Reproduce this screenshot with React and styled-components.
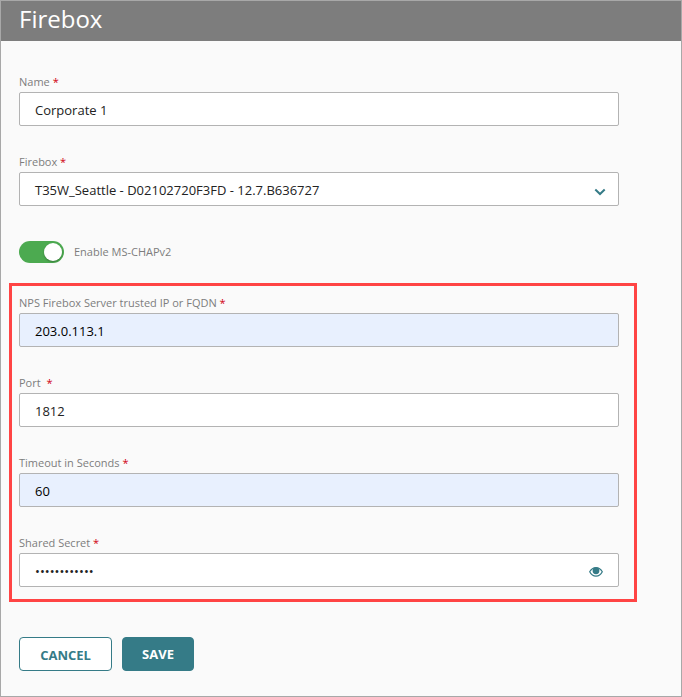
import { useState } from 'react';
import styled, { createGlobalStyle } from 'styled-components';

const GlobalStyle = createGlobalStyle`
    * {
        box-sizing: border-box;
    }

    body {
        margin: 0;
        font-family: "Open Sans", "Noto Sans", sans-serif;
        background: #fafafa;
    }
`;

const Page = styled.div`
    height: 697px;
    border: 1px solid #a8a8a8;
    background: #fafafa;
`;

const Header = styled.header`
    height: 40px;
    padding-left: 18px;
    background: #7d7d7d;
`;

const Title = styled.h1`
    margin: 0;
    color: #fff;
    font-size: 24px;
    font-weight: 400;
    line-height: 35px;
`;

const Form = styled.form`
    display: flex;
    flex-direction: column;
    width: 618px;
    padding: 31px 0 0 18px;
`;

const Field = styled.div`
    margin-bottom: 26px;

    &:last-child {
        margin-bottom: 0;
    }
`;

const Label = styled.div`
    height: 20px;
    color: #7d7d7d;
    font-size: 11px;
    line-height: 20px;
    white-space: pre;
`;

const Required = styled.span`
    color: #d0000f;
    font-weight: 500;
`;

const Control = styled.div`
    display: flex;
    align-items: center;
    justify-content: space-between;
    height: 34px;
    padding: 2px 12px 0 15px;
    border: 1px solid #b3b3b3;
    border-radius: 2px;
    background: ${({ $filled }) => ($filled ? '#e8f0fe' : '#fff')};
    color: ${({ $filled }) => ($filled ? '#000' : '#222')};
    font-size: 13px;
`;

const ToggleRow = styled.div`
    display: flex;
    gap: 10px;
    height: 22px;
    margin: 9px 0 20px;
    color: #7d7d7d;
    font-size: 11px;
    line-height: 21px;
`;

const Toggle = styled.button`
    display: flex;
    justify-content: ${({ $on }) => ($on ? 'flex-end' : 'flex-start')};
    align-items: center;
    width: 45px;
    height: 22px;
    padding: 0 2px;
    border: 0;
    border-radius: 11px;
    background: ${({ $on }) => ($on ? '#4caa50' : '#b3b3b3')};
`;

const Knob = styled.span`
    width: 18px;
    height: 18px;
    border-radius: 50%;
    background: #fff;
    box-shadow: 0 1px 2px rgba(0, 0, 0, 0.3);
`;

const ServerSettings = styled.section`
    width: 628px;
    margin-left: -10px;
    padding: 7px 15px 12px 7px;
    border: 3px solid #ff4444;
`;

const Actions = styled.div`
    display: flex;
    gap: 10px;
    margin-top: 35px;
`;

const Button = styled.button`
    width: ${({ $width }) => $width};
    height: 34px;
    padding: ${({ $primary }) => ($primary ? '0' : '2px 0 0')};
    border: 1px solid #357b87;
    border-radius: 4px;
    background: ${({ $primary }) => ($primary ? '#357b87' : '#fff')};
    color: ${({ $primary }) => ($primary ? '#fff' : '#357b87')};
    font-family: inherit;
    font-size: 13px;
    font-weight: 700;
`;

const Chevron = styled.svg`
    display: block;
    margin-top: 3px;
`;

const Eye = styled.svg`
    display: block;
    margin: 2px 3px 0 0;
`;

const FormField = ({ label, filled, children }) => (
    <Field>
        <Label>{label} <Required>*</Required></Label>
        <Control $filled={filled}>{children}</Control>
    </Field>
);

const ChevronIcon = () => (
    <Chevron width="12" height="8" viewBox="0 0 12 8" fill="none" stroke="#357b87" strokeWidth="2">
        <path d="M1.3 1.5L6 6L10.7 1.5" />
    </Chevron>
);

const EyeIcon = () => (
    <Eye width="14" height="10" viewBox="0 0 14 10" fill="none" stroke="#357b87">
        <path d="M0.7 4.8C2.2 2 4.4 0.6 7 0.6S11.8 2 13.3 4.8C11.8 7.8 9.6 9.2 7 9.2S2.2 7.8 0.7 4.8Z" strokeWidth="1.2" />
        <circle cx="7" cy="3.8" r="3.4" fill="#357b87" stroke="none" />
    </Eye>
);

const App = () => {
    const [chap, setChap] = useState(true);

    return (
        <>
            <GlobalStyle />
            <Page>
                <Header>
                    <Title>Firebox</Title>
                </Header>
                <Form>
                    <FormField label="Name">Corporate 1</FormField>
                    <FormField label="Firebox">
                        T35W_Seattle - D02102720F3FD - 12.7.B636727
                        <ChevronIcon />
                    </FormField>
                    <ToggleRow>
                        <Toggle type="button" $on={chap} onClick={() => setChap(!chap)}>
                            <Knob />
                        </Toggle>
                        Enable MS-CHAPv2
                    </ToggleRow>
                    <ServerSettings>
                        <FormField label="NPS Firebox Server trusted IP or FQDN" filled>203.0.113.1</FormField>
                        <FormField label="Port ">1812</FormField>
                        <FormField label="Timeout in Seconds" filled>60</FormField>
                        <FormField label="Shared Secret">
                            ••••••••••••
                            <EyeIcon />
                        </FormField>
                    </ServerSettings>
                    <Actions>
                        <Button type="button" $width="93px">CANCEL</Button>
                        <Button type="button" $width="72px" $primary>SAVE</Button>
                    </Actions>
                </Form>
            </Page>
        </>
    );
};

export default App;
